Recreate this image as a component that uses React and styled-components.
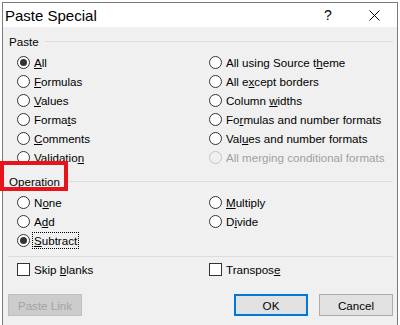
import styled, { createGlobalStyle } from 'styled-components';

const GlobalStyle = createGlobalStyle`
  html, body {
    margin: 0;
    padding: 0;
    background: #ffffff;
    font-family: "Liberation Sans", Arial, sans-serif;
  }
`;

const Page = styled.div`
  width: 400px;
  height: 325px;
  overflow: hidden;
  padding: 2px 0 0 2px;
  box-sizing: border-box;
`;

const Dialog = styled.div`
  width: 396px;
  height: 340px;
  border: 1px solid #7a7a7a;
  background: #f0f0f0;
  box-sizing: border-box;
`;

const TitleBar = styled.div`
  height: 24px;
  background: #ffffff;
  display: flex;
  align-items: center;
  padding-left: 2px;
`;

const Title = styled.div`
  flex: 1;
  font-size: 15px;
  color: #000;
`;

const TitleButton = styled.div`
  width: 46px;
  height: 24px;
  display: flex;
  align-items: center;
  justify-content: center;
  font-size: 14px;
  color: #000;
`;

const Body = styled.div`
  padding: 6px 4px 0 5px;
`;

const GroupHeader = styled.div`
  position: relative;
  display: flex;
  align-items: center;
  height: 16px;
  margin-top: ${(p) => p.$top || 0}px;
`;

const GroupLabel = styled.span`
  font-size: 11.6px;
  color: #000;
  padding-left: 1px;
  margin-right: 6px;
`;

const Line = styled.div`
  flex: 1;
  height: 1px;
  background: #dcdcdc;
`;

const RedBox = styled.div`
  position: absolute;
  left: -8px;
  top: -12px;
  width: 68px;
  height: 30px;
  border: 4px solid #e8141c;
  box-sizing: border-box;
`;

const OptionGrid = styled.div`
  display: grid;
  grid-template-columns: 192px 1fr;
  grid-auto-rows: 19px;
  padding-left: 9px;
  margin-top: ${(p) => p.$top || 0}px;
`;

const Item = styled.label`
  display: flex;
  align-items: center;
  font-size: 11.6px;
  color: ${(p) => (p.$disabled ? '#a0a0a0' : '#000')};
  white-space: nowrap;
`;

const Circle = styled.span`
  width: 13px;
  height: 13px;
  border-radius: 50%;
  border: 1px solid ${(p) => (p.$disabled ? '#c4c4c4' : '#333')};
  background: ${(p) => (p.$disabled ? '#f0f0f0' : '#fff')};
  box-sizing: border-box;
  display: flex;
  align-items: center;
  justify-content: center;
  margin-right: 4px;
  flex-shrink: 0;

  &::after {
    content: '';
    width: 7px;
    height: 7px;
    border-radius: 50%;
    background: #333;
    display: ${(p) => (p.$checked ? 'block' : 'none')};
  }
`;

const Box = styled.span`
  width: 13px;
  height: 13px;
  border: 1px solid #333;
  background: #fff;
  box-sizing: border-box;
  margin-right: 4px;
  flex-shrink: 0;
`;

const Text = styled.span`
  outline: ${(p) => (p.$focus ? '1px dotted #000' : 'none')};
  outline-offset: 1px;
`;

const U = styled.span`
  text-decoration: underline;
`;

const Separator = styled.div`
  height: 1px;
  background: #dcdcdc;
  margin: 6px 0 3px 0;
`;

const Buttons = styled.div`
  display: flex;
  align-items: center;
  margin-top: 15px;
`;

const Button = styled.div`
  width: 74px;
  height: 22px;
  box-sizing: border-box;
  display: flex;
  align-items: center;
  justify-content: center;
  font-size: 11.6px;
  background: ${(p) => (p.$disabled ? '#cccccc' : '#e1e1e1')};
  color: ${(p) => (p.$disabled ? '#a3a3a3' : '#000')};
  border: ${(p) =>
    p.$default ? '2px solid #0078d7' : p.$disabled ? '1px solid #bfbfbf' : '1px solid #adadad'};
  margin-left: ${(p) => p.$gap || 0}px;
`;

const Spacer = styled.div`
  flex: 1;
`;

const k = (before, key, after) => (
  <>
    {before}
    <U>{key}</U>
    {after}
  </>
);

const Radio = ({ checked, disabled, focus, children }) => (
  <Item $disabled={disabled}>
    <Circle $checked={checked} $disabled={disabled} />
    <Text $focus={focus}>{children}</Text>
  </Item>
);

const Check = ({ children }) => (
  <Item>
    <Box />
    <Text>{children}</Text>
  </Item>
);

export default function App() {
  return (
    <Page>
      <GlobalStyle />
      <Dialog>
        <TitleBar>
          <Title>Paste Special</Title>
          <TitleButton>?</TitleButton>
          <TitleButton>
            <svg width="11" height="11" viewBox="0 0 11 11">
              <path d="M0.5 0.5 L10.5 10.5 M10.5 0.5 L0.5 10.5" stroke="#000" strokeWidth="1" />
            </svg>
          </TitleButton>
        </TitleBar>
        <Body>
          <GroupHeader>
            <GroupLabel>Paste</GroupLabel>
            <Line />
          </GroupHeader>
          <OptionGrid $top={4}>
            <Radio checked>{k('', 'A', 'll')}</Radio>
            <Radio>{k('All using Source t', 'h', 'eme')}</Radio>
            <Radio>{k('', 'F', 'ormulas')}</Radio>
            <Radio>{k('All e', 'x', 'cept borders')}</Radio>
            <Radio>{k('', 'V', 'alues')}</Radio>
            <Radio>{k('Column ', 'w', 'idths')}</Radio>
            <Radio>{k('Forma', 't', 's')}</Radio>
            <Radio>{k('Fo', 'r', 'mulas and number formats')}</Radio>
            <Radio>{k('', 'C', 'omments')}</Radio>
            <Radio>{k('Val', 'u', 'es and number formats')}</Radio>
            <Radio>{k('Validatio', 'n', '')}</Radio>
            <Radio disabled>All merging conditional formats</Radio>
          </OptionGrid>
          <GroupHeader $top={6}>
            <RedBox />
            <GroupLabel>Operation</GroupLabel>
            <Line />
          </GroupHeader>
          <OptionGrid $top={4}>
            <Radio>{k('N', 'o', 'ne')}</Radio>
            <Radio>{k('', 'M', 'ultiply')}</Radio>
            <Radio>{k('A', 'd', 'd')}</Radio>
            <Radio>{k('D', 'i', 'vide')}</Radio>
            <Radio checked focus>{k('', 'S', 'ubtract')}</Radio>
          </OptionGrid>
          <Separator />
          <OptionGrid>
            <Check>{k('Skip ', 'b', 'lanks')}</Check>
            <Check>{k('Transpos', 'e', '')}</Check>
          </OptionGrid>
          <Buttons>
            <Button $disabled>Paste Link</Button>
            <Spacer />
            <Button $default>OK</Button>
            <Button $gap={11}>Cancel</Button>
          </Buttons>
        </Body>
      </Dialog>
    </Page>
  );
}
